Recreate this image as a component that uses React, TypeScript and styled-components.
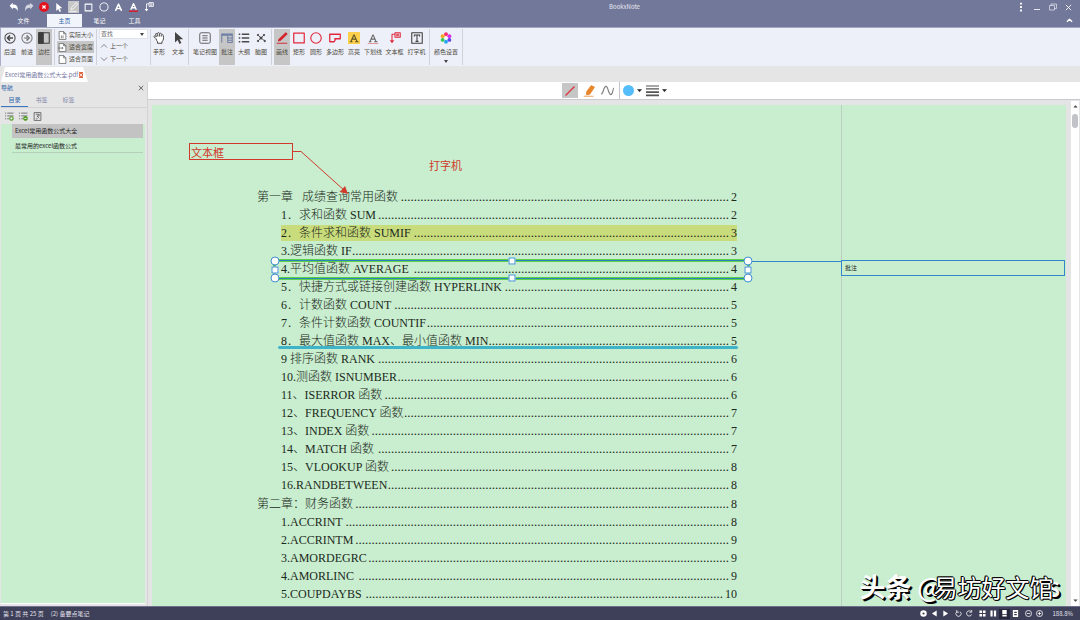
import React, { useLayoutEffect, useRef, useState } from "react";
import styled, { createGlobalStyle, css } from "styled-components";

const GlobalStyle = createGlobalStyle`
  * { box-sizing: border-box; }
  html, body { margin: 0; padding: 0; }
  body { background: #e4e4e4; color: #3c3c3c; font: 6px/8px "Noto Sans CJK SC", sans-serif; }
  button, input { font: inherit; color: inherit; border: 0; padding: 0; margin: 0; background: none; }
  ul, ol { list-style: none; margin: 0; padding: 0; }
  a { color: inherit; text-decoration: none; }
  svg { display: block; flex: none; }
`;

const UI = '"Noto Sans CJK SC", sans-serif';

const Window = styled.div`
  height: 100vh;
  display: flex;
  flex-direction: column;
  overflow: hidden;
`;

/* Header */

const Header = styled.header`
  flex: none;
  background: #727899;
  color: #fff;
  border-bottom: 1px solid #a3a8c2;
`;

const TitleRow = styled.div`
  display: flex;
  align-items: center;
  height: 14px;
  padding-left: 6px;
`;

const QuickBar = styled.div`
  display: flex;
`;

const QuickButton = styled.button<{ $on?: boolean }>`
  width: 15px;
  height: 12px;
  display: flex;
  align-items: center;
  justify-content: center;
  padding: 0 2px;
  background: ${(p) => (p.$on ? "#c6c6c6" : "transparent")} content-box;
`;

const Title = styled.h1`
  flex: 1;
  margin: 0;
  padding-left: 80px;
  text-align: center;
  font: 6px/8px ${UI};
  color: #e6e7f0;
`;

const WindowControls = styled.div`
  display: flex;
  gap: 1px;
  padding-right: 4px;
`;

const WindowButton = styled.button`
  width: 15px;
  height: 10px;
  display: flex;
  align-items: center;
  justify-content: center;
`;

const TabRow = styled.nav`
  display: flex;
  height: 13px;
  padding-right: 3px;
`;

const Tab = styled.button<{ $on?: boolean; $wide?: boolean }>`
  width: ${(p) => (p.$wide ? 47 : 35)}px;
  text-align: center;
  background: ${(p) => (p.$on ? "#f1f4fb" : "transparent")};
  color: ${(p) => (p.$on ? "#2f62a8" : "#fff")};
`;

const Collapse = styled(WindowButton)`
  margin-left: auto;
  height: 13px;
`;

/* Ribbon */

const Ribbon = styled.div`
  flex: none;
  display: flex;
  height: 38px;
  padding: 1px 0;
  background: #edf0f9;
  border-left: 1px solid #a9adc6;
`;

const Group = styled.div<{ $gap?: number; $pad?: string }>`
  display: flex;
  gap: ${(p) => p.$gap ?? 1}px;
  padding: ${(p) => p.$pad ?? "0 2px"};
  border-right: 1px solid #cfd1da;
`;

const Tool = styled.button<{ $on?: boolean; $w?: number }>`
  width: ${(p) => p.$w ?? 16}px;
  display: flex;
  flex-direction: column;
  align-items: center;
  padding-top: 3px;
  gap: 4px;
  white-space: nowrap;
  color: #4d4a3c;
  background: ${(p) => (p.$on ? "#c6c6c6" : "transparent")};
`;

const Stack = styled.div`
  display: flex;
  flex-direction: column;
  justify-content: space-between;
`;

const RowTool = styled.button<{ $on?: boolean }>`
  display: flex;
  align-items: center;
  gap: 2px;
  height: 12px;
  padding: 0 1px;
  white-space: nowrap;
  color: #4d4a3c;
  background: ${(p) => (p.$on ? "#c6c6c6" : "transparent")};
`;

const Search = styled.div`
  display: flex;
  width: 49px;
  height: 10px;
  background: #fff;
  border: 1px solid #e0e2ea;

  input {
    flex: 1;
    min-width: 0;
    padding-left: 1px;
    outline: 0;
  }
  input::placeholder {
    color: #6a6a6a;
    opacity: 1;
  }
  button {
    width: 10px;
  }
`;

const Caret = styled.span`
  display: block;
  width: 0;
  height: 0;
  margin: 0 auto;
  border: 2px solid transparent;
  border-top: 3px solid #444;
  border-bottom: 0;
`;

/* Document tabs */

const DocTabs = styled.div`
  flex: none;
  display: flex;
  height: 16px;
  padding: 1px 0 0 1px;
  background: #e5e5e5;
`;

const DocTab = styled.div`
  display: flex;
  align-items: center;
  gap: 1px;
  width: 87px;
  padding: 0 5px 0 4px;
  white-space: nowrap;
  color: #7273a0;
  background: #fff;
  clip-path: polygon(4px 0, 82px 0, 100% 100%, 0 100%);
`;

const CloseTab = styled.button`
  width: 6px;
  height: 6px;
  display: flex;
  align-items: center;
  justify-content: center;
  background: #e2683f;
`;

/* Body */

const Body = styled.div`
  flex: 1;
  min-height: 0;
  display: flex;
`;

const Sidebar = styled.aside`
  flex: none;
  width: 148px;
  display: flex;
  flex-direction: column;
  padding: 0 1px 2px 1px;
  background: #e5e5e5;
  border-right: 1px solid #d3d3d6;
`;

const PanelHead = styled.div`
  display: flex;
  align-items: center;
  justify-content: space-between;
  height: 11px;
  padding-right: 2px;
  color: #2f62a8;
`;

const PanelTabs = styled.div`
  display: flex;
  height: 15px;
  border-bottom: 1px solid #d2d2d6;
`;

const PanelTab = styled.button<{ $on?: boolean }>`
  width: 27px;
  color: ${(p) => (p.$on ? "#2f62a8" : "#8385a8")};
  border-bottom: 1px solid ${(p) => (p.$on ? "#3a78c4" : "transparent")};
`;

const PanelTools = styled.div`
  display: flex;
  align-items: center;
  gap: 5px;
  height: 16px;
  padding-left: 4px;
`;

const Outline = styled.ul`
  flex: 1;
  margin-right: 1px;
  padding: 0 2px 0 11px;
  background: #c8edcf;
  border-bottom: 1px solid #fff;
`;

const OutlineItem = styled.li<{ $on?: boolean }>`
  height: 14px;
  margin-bottom: 1px;
  padding: 3px;
  color: #222;
  border-bottom: 1px solid #b4cfba;
  ${(p) =>
    p.$on &&
    css`
      background: #c3c3c3;
      border-color: #c3c3c3;
    `}
`;

const Main = styled.main`
  flex: 1;
  min-width: 0;
  display: flex;
  flex-direction: column;
`;

const DrawBar = styled.div`
  flex: none;
  display: flex;
  align-items: center;
  justify-content: center;
  height: 18px;
  gap: 3px;
  background: #fff;
  border-bottom: 1px solid #c9cacf;
`;

const DrawButton = styled.button<{ $on?: boolean; $w?: number }>`
  display: flex;
  align-items: center;
  justify-content: center;
  gap: 3px;
  width: ${(p) => p.$w ?? 16}px;
  height: 15px;
  background: ${(p) => (p.$on ? "#c6c6c6" : "transparent")};
`;

const Rule = styled.span`
  width: 1px;
  height: 17px;
  background: #c4c4ca;
`;

const Viewport = styled.div`
  flex: 1;
  min-height: 0;
  display: flex;
  background: #e4e4e4;
  padding: 5px 1px 0 4px;
`;

const Page = styled.article`
  position: relative;
  flex: 1;
  min-width: 0;
  overflow: hidden;
  padding: 82px 104px 0 105px;
  background: #c8edcf;
`;

const NotesColumn = styled.section`
  position: relative;
  flex: none;
  width: 225px;
  padding: 155px 1px 0 0;
  background: #c8edcf;
  border-left: 1px solid #bccdc2;
`;

const Note = styled.div`
  height: 16px;
  margin-left: -1px;
  padding: 3px;
  border: 1px solid #3387c8;
  color: #222;
`;

const Toc = styled.ol`
  font: 12px/18px "Liberation Serif", "Noto Sans CJK SC", serif;
  font-weight: 300;
  color: #1c2a20;
`;

const TocItem = styled.li<{ $chapter?: boolean; $mark?: "highlight" | "underline" }>`
  position: relative;
  height: 18px;
  margin-left: ${(p) => (p.$chapter ? 0 : 24)}px;
  margin-top: ${(p) => (p.$chapter ? 1 : 0)}px;
  ${(p) =>
    p.$mark === "highlight" &&
    css`
      background: linear-gradient(#c9dc7b, #c9dc7b) 0 1px / 100% 16px no-repeat;
    `}
  ${(p) =>
    p.$mark === "underline" &&
    css`
      &::after {
        content: "";
        position: absolute;
        left: -3px;
        right: -1px;
        bottom: 1px;
        height: 3px;
        border-radius: 2px;
        background: #3fb4c9;
      }
    `}
`;

const TocLink = styled.a`
  display: flex;
  white-space: pre;
`;

const LeaderLine = styled.span`
  flex: 1 1 0;
  min-width: 0;
  height: 18px;
  margin: 0 2px 0 0;
  overflow: hidden;
  text-align: right;
  font-size: 13px;
`;

const Selection = styled.div`
  position: absolute;
  inset: 0 -12px -1px -7px;
  border: 1px solid #2b86b8;
  box-shadow: 0 0 0 1px #5fd04e, inset 0 0 0 1px #5fd04e;
`;

const Handle = styled.span<{ $x: number; $y: number }>`
  position: absolute;
  left: ${(p) => p.$x}%;
  top: ${(p) => p.$y}%;
  width: ${(p) => (p.$x === 50 || p.$y === 50 ? 7 : 9)}px;
  height: ${(p) => (p.$x === 50 || p.$y === 50 ? 7 : 9)}px;
  border: 1px solid #3f8fcf;
  border-radius: ${(p) => (p.$x === 50 || p.$y === 50 ? 0 : 5)}px;
  background: #fff;
  transform: translate(-50%, -50%);
`;

const Connector = styled.span`
  position: absolute;
  left: 100%;
  top: 0;
  width: 93px;
  height: 1px;
  background: #3387c8;
`;

const TextBox = styled.div`
  position: absolute;
  left: 37px;
  top: 38px;
  width: 104px;
  height: 17px;
  padding: 0 1px;
  border: 1px solid #d0392b;
  font: 11px/16px ${UI};
  color: #d0392b;
`;

const CalloutArrow = styled.svg`
  position: absolute;
  left: 141px;
  top: 46px;
`;

const Typewriter = styled.div`
  position: absolute;
  left: 277px;
  top: 52px;
  font: 11px/16px ${UI};
  color: #d0392b;
`;

const ScrollTrack = styled.div`
  flex: none;
  width: 8px;
  margin: -4px 0 0 5px;
  display: flex;
  flex-direction: column;
  align-items: center;
  padding: 3px 0;
  gap: 5px;
  background: #fff;
`;

const ScrollThumb = styled.div`
  width: 6px;
  height: 14px;
  border-radius: 3px;
  background: #c2c3c8;
`;

const ScrollEnd = styled.div`
  margin-top: auto;
`;

const Watermark = styled.div`
  position: absolute;
  right: 6px;
  bottom: 3px;
  display: flex;
  white-space: pre;
  color: #fff;
  font: 500 26px/32px ${UI};
  text-shadow: 1px 1px 0 #000, 2px 2px 0 #000;

  b { font-weight: 700; }
`;

const WatermarkName = styled.span`
  z-index: 1;
  margin: 1px -6px 0 -9px;
  font: 400 24px/32px ${UI};
  text-shadow: -1px 0 #000, 1px 0 #000, 0 -1px #000, 0 1px #000, 1px 1px #000, -1px -1px #000;
`;

/* Status bar */

const StatusBar = styled.footer`
  flex: none;
  display: flex;
  align-items: center;
  height: 14px;
  padding: 0 7px 0 3px;
  gap: 7px;
  color: #e2e2ec;
  background: #3e3f58;
  border-top: 1px solid #6e6f8a;
`;

const StatusTools = styled.div`
  display: flex;
  gap: 2px;
  margin-left: auto;
`;

const StatusGroup = styled.div`
  display: flex;
`;

const StatusButton = styled.button<{ $on?: boolean }>`
  width: 11px;
  height: 10px;
  display: flex;
  align-items: center;
  justify-content: center;
  background: ${(p) => (p.$on ? "#25263c" : "transparent")};
`;

/* The dots between a heading and its page number: as many as the free width holds. */
const DOT_ADVANCE = 3.25;

const Leader = () => {
  const ref = useRef<HTMLSpanElement>(null);
  const [count, setCount] = useState(0);
  useLayoutEffect(() => {
    const el = ref.current;
    if (!el) return;
    const measure = () =>
      setCount(Math.max(0, Math.floor(el.getBoundingClientRect().width / DOT_ADVANCE)));
    measure();
    const observer = new ResizeObserver(measure);
    observer.observe(el);
    return () => observer.disconnect();
  }, []);
  return (
    <LeaderLine ref={ref} aria-hidden="true">
      {".".repeat(count)}
    </LeaderLine>
  );
};

type IconProps = { size?: number; color?: string; width?: number; children: React.ReactNode };

const Icon = ({ size = 12, color = "#4a4a4a", width = 1.4, children }: IconProps) => (
  <svg
    width={size}
    height={size}
    viewBox="0 0 16 16"
    fill="none"
    stroke={color}
    strokeWidth={width}
    strokeLinejoin="round"
    aria-hidden="true"
  >
    {children}
  </svg>
);

const undo = <path d="M1 6L6 1v3c6 0 9 3 8 11-1-4-3-6-8-6v3z" fill="#fff" stroke="none" />;
const redo = <path d="M15 6l-5-5v3C4 4 1 7 2 15c1-4 3-6 8-6v3z" fill="#d3d5e0" stroke="none" />;
const pointer = <path d="M4 0v14l3.500-3.500L10 16l2.500-1.200L10 9.500h5z" fill="currentColor" stroke="none" />;

const callout = (color: string) => (
  <>
    <path d="M8 1h7v6H8zM8 3H4v10M9.500 3h4M9.500 5h4" stroke={color} />
    <path d="M1 11h6l-3 4z" fill={color} stroke="none" />
  </>
);

const quickTools: { name: string; on?: boolean; icon: React.ReactNode }[] = [
  { name: "撤销", icon: <Icon size={10}>{undo}</Icon> },
  { name: "重做", icon: <Icon size={10}>{redo}</Icon> },
  {
    name: "取消",
    icon: (
      <Icon size={10} color="#fff" width={2}>
        <circle cx="8" cy="8" r="8" fill="#e2131f" stroke="none" />
        <path d="M5.500 5.500l5 5M10.500 5.500l-5 5" />
      </Icon>
    ),
  },
  { name: "选择", icon: <Icon size={9}><g color="#fff">{pointer}</g></Icon> },
  {
    name: "画线",
    on: true,
    icon: (
      <Icon size={10} color="#fff" width={1.200}>
        <path d="M4 9l7-8 3 2-7 8-4 1zM1 15h11" />
      </Icon>
    ),
  },
  { name: "矩形", icon: <Icon size={9} color="#fff" width={1.800}><path d="M2 2h12v12H2z" /></Icon> },
  { name: "圆形", icon: <Icon size={10} color="#fff"><circle cx="8" cy="8" r="6.500" /></Icon> },
  { name: "高亮", icon: <Icon size={9} color="#fff" width={2.600}><path d="M2.500 14L8 2l5.500 12M4.500 10h7" /></Icon> },
  {
    name: "下划线",
    icon: (
      <Icon size={9} color="#fff" width={2.400}>
        <path d="M3 12L8 1l5 11M5 8.500h6" />
        <path d="M0 14.500h16" stroke="#e2131f" />
      </Icon>
    ),
  },
  { name: "文本框", icon: <Icon size={10}>{callout("#fff")}</Icon> },
];

const pageIcon = (inner: React.ReactNode) => (
  <Icon size={9} color="#666">
    <path d="M2 1h8l4 4v10H2zM10 1v4h4" fill="#fff" />
    {inner}
  </Icon>
);

const iconBack = (
  <Icon>
    <circle cx="8" cy="8" r="6.800" />
    <path d="M12 8H5M8 4.500L4.500 8 8 11.500" strokeWidth="2" />
  </Icon>
);
const iconForward = (
  <Icon color="#7b7b7b">
    <circle cx="8" cy="8" r="6.800" />
    <path d="M4 8h7M8 4.500L11.500 8 8 11.500M8 4v8" />
  </Icon>
);
const iconSidebar = (
  <Icon color="#3d3d3d">
    <path d="M1 1h14v14H1z" />
    <path d="M1 1h6v14H1z" fill="#3d3d3d" />
  </Icon>
);
const iconHand = (
  <Icon color="#444" width={1.300}>
    <path
      d="M4 9L1.500 6.500C1 5 2.500 4.500 3.500 5.500L4.500 6.500 3.500 3C3.500 1.500 5 1.500 5.500 3L6 2C6.500.500 8 .500 8.500 2 9.500 1 10.500 1.500 11 3c1-.700 2 0 2.500 1.500.800 3.500 1 6-1.500 8.500V15H6v-2C5 12 4.500 10.500 4 9zM6 3l.500 3M8.500 2.500V6M11 3.500V6"
      fill="#fff"
    />
  </Icon>
);
const iconNotes = (
  <Icon color="#555" width={1.200}>
    <rect x="1" y="1" width="14" height="14" rx="2" />
    <path d="M4.500 5h7M4.500 8h7M4.500 11h7" />
  </Icon>
);
const iconAnnot = (
  <Icon color="#6f7fa6">
    <path d="M1 3.500h14" strokeWidth="3" />
    <path d="M1 2v12M9 5v9h6V2M9 8h6M9 11h6" />
  </Icon>
);
const iconList = (
  <Icon width={1.700}>
    <path d="M1 3h2M1 8h2M1 13h2M5 3h10M5 8h10M5 13h10" />
  </Icon>
);
const iconMind = (
  <Icon color="#444" width={1.100}>
    <path d="M4 4l4 4 4-4M8 8l-4 4M8 8l5 4" />
    <g fill="#444">
      <circle cx="8" cy="8" r="1.500" />
      <circle cx="4" cy="4" r="1" />
      <circle cx="12" cy="4" r="1" />
      <circle cx="4" cy="12" r="1" />
      <circle cx="13" cy="12" r="1" />
    </g>
  </Icon>
);
const iconPen = (
  <Icon color="#d5202a" width={1.200}>
    <path d="M4 9.500L13 1l2 1.500-8.500 8.500L3 12z" fill="#d5202a" />
    <path d="M1 15h14" />
  </Icon>
);
const iconRect = <Icon color="#e0283c" width={1.600}><path d="M1 1.500h14v13H1z" /></Icon>;
const iconCircle = <Icon color="#e0283c" width={1.500}><circle cx="8" cy="8" r="7" /></Icon>;
const iconPolygon = (
  <Icon color="#e0283c" width={1.700}>
    <path d="M1 3h14v6H9l-2 4H1z" />
    <path d="M7 9h2" />
  </Icon>
);
const serifA = "M2.500 13h3.500M9.500 13H14M4 12.500L8 3.500M8 3.500L12 12.500M5.500 9.500h5";
const iconHighlight = (
  <Icon color="#5c5428" width={1.600}>
    <path d="M0 0h16v16H0z" fill="#fcd04c" stroke="none" />
    <path d={serifA} />
  </Icon>
);
const iconUnderline = (
  <Icon color="#666" width={1.500}>
    <path d={serifA} />
    <path d="M1 15.500h14" stroke="#d66" strokeWidth="1" />
  </Icon>
);
const iconType = (
  <Icon color="#3d3d3d">
    <path d="M1 1h14v14H1z" />
    <path d="M4.500 6V4h7v2M8 4v8M6 12.500h4" />
  </Icon>
);
const iconPalette = (
  <Icon>
    <g stroke="none">
      <circle cx="8" cy="3" r="2.600" fill="#ff2f6e" />
      <circle cx="12.500" cy="5.500" r="2.600" fill="#d92be8" />
      <circle cx="12.500" cy="10.500" r="2.600" fill="#5a49ee" />
      <circle cx="8" cy="13" r="2.600" fill="#2aa5f5" />
      <circle cx="3.500" cy="10.500" r="2.600" fill="#37c95a" />
      <circle cx="3.500" cy="5.500" r="2.600" fill="#f5a623" />
      <circle cx="8" cy="8" r="2" fill="#fff" />
    </g>
  </Icon>
);

type ToolDef = { label: string; icon: React.ReactNode; on?: boolean; w?: number };

const navTools: ToolDef[] = [
  { label: "后退", icon: iconBack },
  { label: "前进", icon: iconForward },
  { label: "边栏", icon: iconSidebar, on: true },
];
const viewTools: ToolDef[] = [
  { label: "笔记视图", icon: iconNotes, w: 26 },
  { label: "批注", icon: iconAnnot, on: true },
  { label: "大纲", icon: iconList },
  { label: "脑图", icon: iconMind },
];
const markTools: ToolDef[] = [
  { label: "画线", icon: iconPen, on: true },
  { label: "矩形", icon: iconRect },
  { label: "圆形", icon: iconCircle },
  { label: "多边形", icon: iconPolygon, w: 20 },
  { label: "高亮", icon: iconHighlight },
  { label: "下划线", icon: iconUnderline, w: 20 },
  { label: "文本框", icon: <Icon>{callout("#e0283c")}</Icon>, w: 21 },
  { label: "打字机", icon: iconType, w: 21 },
];

const Tools = ({ items }: { items: ToolDef[] }) => (
  <>
    {items.map((t) => (
      <Tool key={t.label} $on={t.on} $w={t.w} aria-pressed={!!t.on}>
        {t.icon}
        {t.label}
      </Tool>
    ))}
  </>
);

const toc: { t: string; p: number; chapter?: boolean; mark?: "highlight" | "underline"; selected?: boolean }[] = [
  { t: "第一章   成绩查询常用函数", p: 2, chapter: true },
  { t: "1．求和函数 SUM", p: 2 },
  { t: "2．条件求和函数 SUMIF", p: 3, mark: "highlight" },
  { t: "3.逻辑函数 IF", p: 3 },
  { t: "4.平均值函数 AVERAGE ", p: 4, selected: true },
  { t: "5．快捷方式或链接创建函数 HYPERLINK", p: 4 },
  { t: "6．计数函数 COUNT ", p: 5 },
  { t: "7．条件计数函数 COUNTIF", p: 5 },
  { t: "8．最大值函数 MAX、最小值函数 MIN", p: 5, mark: "underline" },
  { t: "9 排序函数 RANK", p: 6 },
  { t: "10.测函数 ISNUMBER", p: 6 },
  { t: "11、ISERROR 函数", p: 6 },
  { t: "12、FREQUENCY 函数", p: 7 },
  { t: "13、INDEX 函数", p: 7 },
  { t: "14、MATCH 函数 ", p: 7 },
  { t: "15、VLOOKUP 函数", p: 8 },
  { t: "16.RANDBETWEEN", p: 8 },
  { t: "第二章：财务函数", p: 8, chapter: true },
  { t: "1.ACCRINT", p: 8 },
  { t: "2.ACCRINTM", p: 9 },
  { t: "3.AMORDEGRC", p: 9 },
  { t: "4.AMORLINC ", p: 9 },
  { t: "5.COUPDAYBS ", p: 10 },
];

const handles = [
  [0, 0],
  [50, 0],
  [100, 0],
  [0, 50],
  [100, 50],
  [0, 100],
  [50, 100],
  [100, 100],
];

const statusIcons: { name: string; icon: React.ReactNode; on?: boolean }[][] = [
  [
    { name: "设置", icon: <circle cx="8" cy="8" r="5" strokeWidth="5" /> },
    { name: "上一页", icon: <path d="M13 1v14L2 8z" fill="#fff" stroke="none" /> },
    { name: "下一页", icon: <path d="M3 1v14l11-7z" fill="#fff" stroke="none" /> },
  ],
  [
    { name: "向左旋转", icon: <path d="M4 4a6 6 0 1 0 8 0M4 0v5h5" /> },
    { name: "向右旋转", icon: <path d="M12 4a6 6 0 1 0 1 6M13 0v5H8" /> },
  ],
  [
    { name: "网格", icon: <path d="M1 1h6v6H1zM9 1h6v6H9zM1 9h6v6H1zM9 9h6v6H9z" fill="#fff" stroke="none" /> },
    { name: "双页", icon: <path d="M1 1h5v14H1zM9 1h5v14H9z" fill="#fff" stroke="none" /> },
    { name: "连续", on: true, icon: <path d="M3 0h10v9H3zM3 11h10v4H3z" fill="#fff" stroke="none" /> },
    { name: "单页", icon: <path d="M2 0h12v16H2zM5 4v3h6V4zM5 9v3h6V9z" fill="#fff" fillRule="evenodd" stroke="none" /> },
  ],
  [
    { name: "缩小", icon: <><circle cx="8" cy="8" r="7" /><path d="M4 8h8" /></> },
    { name: "放大", icon: <><circle cx="8" cy="8" r="7" /><path d="M4 8h8M8 4v8" /></> },
  ],
];

export default function App() {
  return (
    <Window>
      <GlobalStyle />
      <Header>
        <TitleRow>
          <QuickBar>
            {quickTools.map((q) => (
              <QuickButton key={q.name} $on={q.on} aria-label={q.name}>
                {q.icon}
              </QuickButton>
            ))}
          </QuickBar>
          <Title>BookxNote</Title>
          <WindowControls>
            <WindowButton aria-label="菜单">
              <Icon size={10} color="#fff"><path d="M8 1v3M8 6.500v3M8 12v3" strokeWidth="3" /></Icon>
            </WindowButton>
            <WindowButton aria-label="最小化">
              <Icon size={8} color="#e6e7f0"><path d="M2 13h12" strokeWidth="2" /></Icon>
            </WindowButton>
            <WindowButton aria-label="还原">
              <Icon size={8} color="#e6e7f0"><path d="M1 5h10v9H1zM4 5V2h11v9h-4" /></Icon>
            </WindowButton>
            <WindowButton aria-label="关闭">
              <Icon size={7} color="#fff" width={2}><path d="M2 2l12 12M14 2L2 14" /></Icon>
            </WindowButton>
          </WindowControls>
        </TitleRow>
        <TabRow>
          <Tab $wide>文件</Tab>
          <Tab $on>主页</Tab>
          <Tab>笔记</Tab>
          <Tab>工具</Tab>
          <Collapse aria-label="收起功能区">
            <Icon size={7} color="#fff" width={3}><path d="M2 11l6-6 6 6" /></Icon>
          </Collapse>
        </TabRow>
      </Header>

      <Ribbon>
        <Group $pad="0 2px 0 1px">
          <Tools items={navTools} />
        </Group>
        <Group>
          <Stack>
            <RowTool>{pageIcon(<path d="M6 8v5M9 8v5" />)}实际大小</RowTool>
            <RowTool $on>{pageIcon(<path d="M0 9h9M7 7l2 2-2 2" />)}适合宽度</RowTool>
            <RowTool>{pageIcon(null)}适合页面</RowTool>
          </Stack>
        </Group>
        <Group>
          <Stack>
            <Search>
              <input aria-label="查找" placeholder="查找" />
              <button aria-label="查找选项"><Caret /></button>
            </Search>
            <RowTool>
              <Icon size={8} color="#555"><path d="M2 11l6-6 6 6" /></Icon>
              上一个
            </RowTool>
            <RowTool>
              <Icon size={8} color="#555"><path d="M2 5l6 6 6-6" /></Icon>
              下一个
            </RowTool>
          </Stack>
        </Group>
        <Group $gap={3} $pad="0 2px 0 0">
          <Tool>{iconHand}手形</Tool>
          <Tool><Icon color="#333"><g color="#444">{pointer}</g></Icon>文本</Tool>
        </Group>
        <Group $pad="0 2px 0 3px">
          <Tools items={viewTools} />
        </Group>
        <Group>
          <Tools items={markTools} />
        </Group>
        <Group>
          <Tool $w={28}>
            {iconPalette}
            颜色设置
            <Caret />
          </Tool>
        </Group>
      </Ribbon>

      <DocTabs>
        <DocTab>
          Excel常用函数公式大全.pdf
          <CloseTab aria-label="关闭标签">
            <Icon size={4} color="#fff" width={3}><path d="M2 2l12 12M14 2L2 14" /></Icon>
          </CloseTab>
        </DocTab>
      </DocTabs>

      <Body>
        <Sidebar>
          <PanelHead>
            导航
            <button aria-label="关闭导航">
              <Icon size={6} color="#444" width={2}><path d="M2 2l12 12M14 2L2 14" /></Icon>
            </button>
          </PanelHead>
          <PanelTabs>
            <PanelTab $on>目录</PanelTab>
            <PanelTab>书签</PanelTab>
            <PanelTab>标签</PanelTab>
          </PanelTabs>
          <PanelTools>
            <button aria-label="全部展开">
              <Icon size={9} color="#555"><path d="M0 2h2M4 2h11M0 7h2M4 7h11M0 12h2M4 12h3" /><circle cx="11.500" cy="11.500" r="3" stroke="#4d9a1e" strokeWidth="2" fill="#fff" /></Icon>
            </button>
            <button aria-label="全部收起">
              <Icon size={9} color="#555"><path d="M0 2h2M4 2h11M0 7h2M4 7h11M0 12h2M4 12h3" /><circle cx="11.500" cy="11.500" r="3.500" stroke="#4d9a1e" fill="#4d9a1e" /><path d="M9.500 11.500h4" stroke="#fff" /></Icon>
            </button>
            <button aria-label="定位">
              <Icon size={9} color="#555"><path d="M2 1h12v14H2zM5 4h6v3H7l4 4M5 12h3" /></Icon>
            </button>
          </PanelTools>
          <Outline>
            <OutlineItem $on><a href="#all">Excel常用函数公式大全</a></OutlineItem>
            <OutlineItem><a href="#common">最常用的excel函数公式</a></OutlineItem>
          </Outline>
        </Sidebar>

        <Main>
          <DrawBar>
            <DrawButton $on aria-label="直线">
              <Icon color="#d93b45" width={1.800}><path d="M2 14L14 2" /></Icon>
            </DrawButton>
            <DrawButton aria-label="荧光笔">
              <Icon color="#e8862c">
                <path d="M5 9l6-8 4 2-6 9-4 1z" fill="#e8862c" />
                <path d="M1 15h13" stroke="#eba76a" />
              </Icon>
            </DrawButton>
            <DrawButton aria-label="曲线">
              <Icon size={13} color="#808080"><path d="M0 12C3 13 3 3 6 3s3 10 6 10 2-7 4-8" /></Icon>
            </DrawButton>
            <Rule />
            <DrawButton $w={20} aria-label="颜色">
              <Icon size={11}><circle cx="8" cy="8" r="8" fill="#54bdfa" stroke="none" /></Icon>
              <Icon size={5}><path d="M0 4h16L8 13z" fill="#222" stroke="none" /></Icon>
            </DrawButton>
            <DrawButton $w={21} aria-label="线宽">
              <Icon size={13} color="#555"><path d="M0 2.500h16M0 6h16" /><path d="M0 10h16M0 14h16" strokeWidth="2" /></Icon>
              <Icon size={5}><path d="M0 4h16L8 13z" fill="#222" stroke="none" /></Icon>
            </DrawButton>
          </DrawBar>

          <Viewport>
            <Page>
              <Toc>
                {toc.map((row) => (
                  <TocItem key={row.t} $chapter={row.chapter} $mark={row.mark}>
                    <TocLink href={`#page-${row.p}`}>
                      <span>{row.t}</span>
                      <Leader />
                      <span>{row.p}</span>
                    </TocLink>
                    {row.selected && (
                      <Selection>
                        <Connector />
                        {handles.map(([x, y]) => (
                          <Handle key={`${x}-${y}`} $x={x} $y={y} />
                        ))}
                      </Selection>
                    )}
                  </TocItem>
                ))}
              </Toc>
              <TextBox>文本框</TextBox>
              <CalloutArrow width="56" height="44" viewBox="0 0 56 44" fill="none" stroke="#d0392b" aria-hidden="true">
                <path d="M0 .500h8L52 40" />
                <path d="M55 43l-8-2 5-6z" fill="#d0392b" stroke="none" />
              </CalloutArrow>
              <Typewriter>打字机</Typewriter>
            </Page>
            <NotesColumn>
              <Note>批注</Note>
              <Watermark>
                <b>头条</b>
                <span> @</span>
                <WatermarkName>易坊好文馆</WatermarkName>
                <span>s</span>
              </Watermark>
            </NotesColumn>
            <ScrollTrack>
              <Icon size={5}><path d="M1 11h14L8 4z" fill="#444" stroke="none" /></Icon>
              <ScrollThumb />
              <ScrollEnd>
                <Icon size={5}><path d="M1 5h14l-7 7z" fill="#444" stroke="none" /></Icon>
              </ScrollEnd>
            </ScrollTrack>
          </Viewport>
        </Main>
      </Body>

      <StatusBar>
        <span>第 1 页 共 25 页</span>
        <span>(2) 备要点笔记</span>
        <StatusTools>
          {statusIcons.map((group, i) => (
            <StatusGroup key={i}>
              {group.map((s) => (
                <StatusButton key={s.name} $on={s.on} aria-label={s.name}>
                  <Icon size={7} color="#fff" width={1.800}>{s.icon}</Icon>
                </StatusButton>
              ))}
            </StatusGroup>
          ))}
        </StatusTools>
        <span>188.8%</span>
      </StatusBar>
    </Window>
  );
}
